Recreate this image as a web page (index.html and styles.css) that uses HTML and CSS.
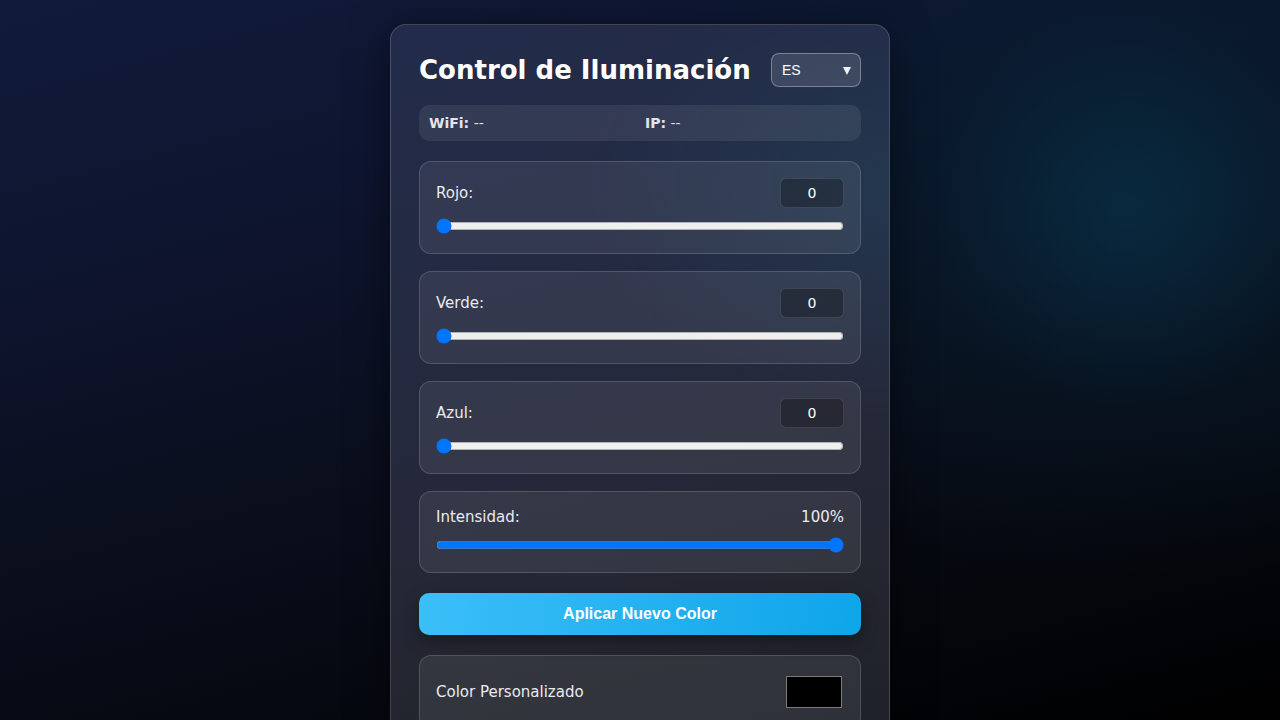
FILE: index.html
```html
<!DOCTYPE html>
<html lang="es">
<head>
<meta charset="utf-8">
<title>Control de Iluminación</title>
<link rel="stylesheet" href="styles.css">
</head>
<body>
<main class="card">
  <header class="header">
    <h1 class="title">Control de Iluminación</h1>
    <div class="lang">
      <select class="lang-select">
        <option>ES</option>
        <option>EN</option>
      </select>
    </div>
  </header>

  <section class="info">
    <div class="info-item"><strong>WiFi:</strong> --</div>
    <div class="info-item"><strong>IP:</strong> --</div>
  </section>

  <section class="group">
    <div class="group-row">
      <label class="label">Rojo:</label>
      <input class="num" type="number" value="0" min="0" max="255">
    </div>
    <input class="range" type="range" min="0" max="255" value="0">
  </section>

  <section class="group">
    <div class="group-row">
      <label class="label">Verde:</label>
      <input class="num" type="number" value="0" min="0" max="255">
    </div>
    <input class="range" type="range" min="0" max="255" value="0">
  </section>

  <section class="group">
    <div class="group-row">
      <label class="label">Azul:</label>
      <input class="num" type="number" value="0" min="0" max="255">
    </div>
    <input class="range" type="range" min="0" max="255" value="0">
  </section>

  <section class="group group-intensity">
    <div class="group-row">
      <label class="label">Intensidad:</label>
      <span class="value">100%</span>
    </div>
    <input class="range" type="range" min="0" max="100" value="100">
  </section>

  <button class="apply">Aplicar Nuevo Color</button>

  <section class="group group-color">
    <div class="group-row">
      <label class="label">Color Personalizado</label>
      <input class="color" type="color" value="#000000">
    </div>
  </section>
</main>
</body>
</html>
```

FILE: styles.css
```css
* { box-sizing: border-box; }

html, body { height: 100%; }

body {
  margin: 0;
  padding: 24px 0;
  font-family: "DejaVu Sans", sans-serif;
  color: #e8e9ee;
  background-color: #030409;
  background-image:
    radial-gradient(circle at 88% 29%, rgba(10, 52, 78, 0.55) 0, rgba(10, 52, 78, 0) 16%),
    radial-gradient(ellipse 45% 55% at 90% 25%, rgba(6, 32, 48, 0.75) 0, rgba(6, 32, 48, 0) 100%),
    linear-gradient(165deg, #111a3a 0%, #0e1530 25%, #0a0e1c 55%, #05070d 80%, #000000 100%);
  overflow: hidden;
}

.card {
  width: 500px;
  margin: 0 auto;
  padding: 28px;
  border: 1px solid rgba(255, 255, 255, 0.16);
  border-radius: 16px;
  background-image:
    radial-gradient(ellipse 60% 30% at 100% 22%, rgba(35, 70, 95, 0.45), rgba(35, 70, 95, 0) 100%),
    linear-gradient(165deg, #222b4a 0%, #232a42 30%, #25283a 55%, #23252e 80%, #1d1f29 100%);
  box-shadow: 0 10px 40px rgba(0, 0, 0, 0.5);
}

.header {
  display: flex;
  align-items: center;
  justify-content: space-between;
  height: 34px;
  margin-bottom: 18px;
}

.title {
  margin: 0;
  font-size: 26px;
  font-weight: bold;
  color: #ffffff;
  line-height: 1;
}

.lang {
  position: relative;
  width: 90px;
  height: 34px;
}

.lang::after {
  content: "";
  position: absolute;
  right: 10px;
  top: 14px;
  border-left: 4px solid transparent;
  border-right: 4px solid transparent;
  border-top: 8px solid #f0f0f0;
  pointer-events: none;
}

.lang-select {
  appearance: none;
  -webkit-appearance: none;
  width: 90px;
  height: 34px;
  padding: 0 10px;
  border: 1px solid rgba(255, 255, 255, 0.32);
  border-radius: 8px;
  background: rgba(255, 255, 255, 0.12);
  color: #ffffff;
  font-family: "Liberation Sans", Arial, sans-serif;
  font-size: 14px;
}

.info {
  display: grid;
  grid-template-columns: 1fr 1fr;
  gap: 10px;
  padding: 10px;
  border-radius: 10px;
  background: rgba(255, 255, 255, 0.08);
  font-size: 14px;
  line-height: 16px;
  color: #dcdde3;
  margin-bottom: 20px;
}

.info-item strong { color: #e4e5ea; }

.group {
  padding: 16px 16px 17px;
  border: 1px solid rgba(255, 255, 255, 0.15);
  border-radius: 12px;
  background: rgba(255, 255, 255, 0.075);
  margin-bottom: 17px;
}

.group-row {
  display: flex;
  align-items: center;
  justify-content: space-between;
  margin-bottom: 10px;
}

.label {
  font-size: 15px;
  color: #eaeaf0;
}

.value {
  font-size: 15px;
  color: #eaeaf0;
}

.num {
  width: 64px;
  height: 30px;
  padding: 0 6px;
  border: 1px solid rgba(255, 255, 255, 0.12);
  border-radius: 6px;
  background: rgba(0, 0, 0, 0.28);
  color: #ffffff;
  font-family: "DejaVu Sans", sans-serif;
  font-size: 14px;
  text-align: center;
  -moz-appearance: textfield;
}

.num::-webkit-inner-spin-button,
.num::-webkit-outer-spin-button {
  -webkit-appearance: none;
  margin: 0;
}

.range {
  display: block;
  width: 100%;
  margin: 2px 0;
}

.group-intensity {
  padding-bottom: 17px;
  margin-bottom: 20px;
}

.group-intensity .group-row { margin-bottom: 11px; }

.apply {
  display: block;
  width: 100%;
  height: 42px;
  border: none;
  border-radius: 10px;
  background: linear-gradient(100deg, #3bbff8 0%, #0ea5e9 100%);
  color: #ffffff;
  font-family: "Liberation Sans", Arial, sans-serif;
  font-size: 16px;
  font-weight: bold;
  box-shadow: 0 6px 16px rgba(0, 0, 0, 0.35);
  margin-bottom: 20px;
}

.group-color {
  padding: 20px 16px;
}

.group-color .group-row { margin-bottom: 0; }

.color {
  width: 56px;
  height: 32px;
  padding: 0;
  margin-right: 2px;
  border: none;
  background: transparent;
}

.color::-webkit-color-swatch-wrapper { padding: 0; }
.color::-webkit-color-swatch { border: 1px solid #7a7a7a; border-radius: 0; }
```
